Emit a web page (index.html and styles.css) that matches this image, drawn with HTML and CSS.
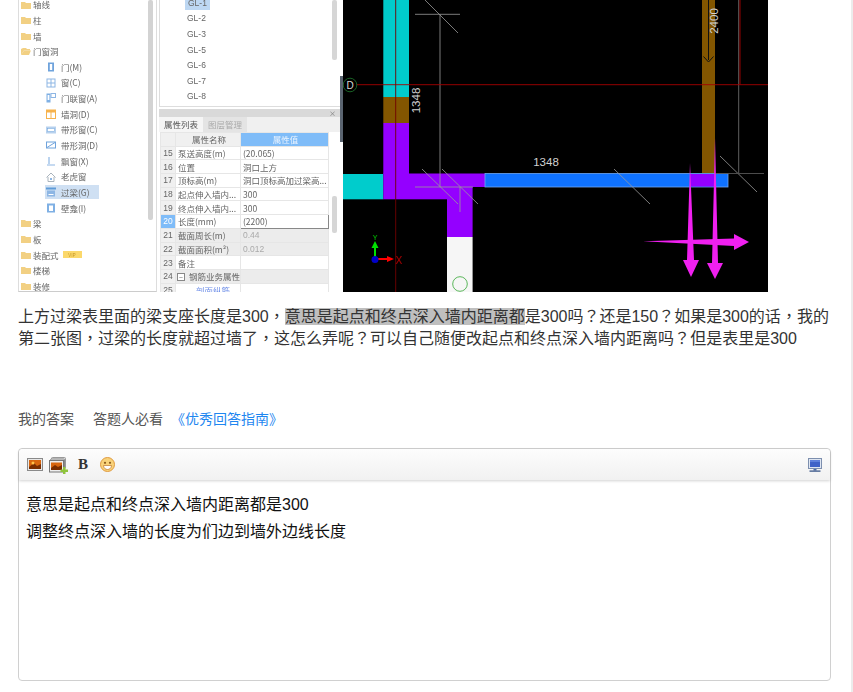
FILE: index.html
```html
<!DOCTYPE html>
<html lang="zh-CN">
<head>
<meta charset="utf-8">
<title>问题回答</title>
<link rel="stylesheet" href="styles.css">
</head>
<body>
<main class="page">
  <div class="shot">
    <div class="tree">
      <ul class="tree-list">
        <li class="node"><svg class="folder" viewBox="0 0 10 8"><path d="M0 1h4l1 1h5v6H0z"/></svg>轴线</li>
        <li class="node"><svg class="folder" viewBox="0 0 10 8"><path d="M0 1h4l1 1h5v6H0z"/></svg>柱</li>
        <li class="node"><svg class="folder" viewBox="0 0 10 8"><path d="M0 1h4l1 1h5v6H0z"/></svg>墙</li>
        <li class="node"><svg class="folder" viewBox="0 0 10 8"><path d="M2 1h3l1 1h3v1.500H3L0 8V2z"/><path d="M3 3.500h7L8 8H0z"/></svg>门窗洞</li>
        <li class="leaf"><svg class="ico" viewBox="0 0 10 10"><rect x="2" y="0.5" width="6" height="9" fill="#6fa3dc"/><rect x="3.800" y="2" width="2.400" height="6" fill="#fff"/></svg>门(M)</li>
        <li class="leaf"><svg class="ico" viewBox="0 0 10 10"><rect x="1" y="1" width="8" height="8" fill="#fff" stroke="#8db6e4"/><path d="M5 1v8M1 5h8" stroke="#8db6e4"/></svg>窗(C)</li>
        <li class="leaf"><svg class="ico" viewBox="0 0 10 10"><rect x="0.5" y="0.5" width="4" height="9" fill="#7fb0e4"/><rect x="1.600" y="2" width="1.800" height="5" fill="#fff"/><rect x="5" y="0.5" width="4.500" height="4" fill="#fff" stroke="#8db6e4"/></svg>门联窗(A)</li>
        <li class="leaf"><svg class="ico" viewBox="0 0 10 10"><rect x="0.5" y="1" width="9" height="8.500" fill="#fff" stroke="#f6b24c"/><rect x="0" y="1" width="10" height="2.500" fill="#f6b24c"/><path d="M5 3v6" stroke="#f6b24c"/></svg>墙洞(D)</li>
        <li class="leaf"><svg class="ico" viewBox="0 0 10 10"><rect x="0" y="1.500" width="10" height="7" fill="#b7d1ee"/><rect x="1.500" y="3.500" width="7" height="3" fill="#fff" stroke="#6fa3dc" stroke-width=".5"/></svg>带形窗(C)</li>
        <li class="leaf"><svg class="ico" viewBox="0 0 10 10"><rect x="0.5" y="2" width="9" height="6" fill="#fff" stroke="#6fa3dc"/><path d="M1 7.500 9 2.500" stroke="#6fa3dc"/></svg>带形洞(D)</li>
        <li class="leaf"><svg class="ico" viewBox="0 0 10 10"><path d="M3 1v7M1 9h8" stroke="#8db6e4" fill="none" stroke-width="1.200"/></svg>飘窗(X)</li>
        <li class="leaf"><svg class="ico" viewBox="0 0 10 10"><path d="M5 1 .5 5.500M5 1l4.500 4.500M2 5v4.500h6V5" stroke="#a9b3bc" fill="none"/><rect x="4" y="6" width="2" height="2" fill="#8db6e4"/></svg>老虎窗</li>
        <li class="leaf leaf-on"><svg class="ico" viewBox="0 0 10 10"><rect x="0" y="0.5" width="10" height="2" fill="#5f9bd8"/><rect x="1" y="3.500" width="8" height="6" fill="#8db6e4"/><path d="M2.500 7.500h5" stroke="#fff"/></svg>过梁(G)</li>
        <li class="leaf"><svg class="ico" viewBox="0 0 10 10"><rect x="1" y="0.500" width="8" height="9" fill="#7fb0e4"/><rect x="3" y="2.500" width="4" height="5.500" fill="#fff"/></svg>壁龛(I)</li>
        <li class="node"><svg class="folder" viewBox="0 0 10 8"><path d="M0 1h4l1 1h5v6H0z"/></svg>梁</li>
        <li class="node"><svg class="folder" viewBox="0 0 10 8"><path d="M0 1h4l1 1h5v6H0z"/></svg>板</li>
        <li class="node"><svg class="folder" viewBox="0 0 10 8"><path d="M0 1h4l1 1h5v6H0z"/></svg>装配式<span class="vip">VIP</span></li>
        <li class="node"><svg class="folder" viewBox="0 0 10 8"><path d="M0 1h4l1 1h5v6H0z"/></svg>楼梯</li>
        <li class="node"><svg class="folder" viewBox="0 0 10 8"><path d="M0 1h4l1 1h5v6H0z"/></svg>装修</li>
      </ul>
      <div class="tree-bar"></div>
    </div>

    <div class="side">
      <div class="gl">
        <ul class="gl-list">
          <li><span class="gl-on">GL-1</span></li>
          <li>GL-2</li>
          <li>GL-3</li>
          <li>GL-5</li>
          <li>GL-6</li>
          <li>GL-7</li>
          <li>GL-8</li>
        </ul>
        <div class="gl-bar"></div>
      </div>
      <div class="props-head">×</div>
      <div class="tabs"><span class="tab tab-on">属性列表</span><span class="tab">图层管理</span></div>
      <div class="props">
        <table class="grid">
          <thead><tr><th class="c-n"></th><th class="c-k">属性名称</th><th class="c-v th-on">属性值</th></tr></thead>
          <tbody>
            <tr><td class="c-n">15</td><td>泵送高度(m)</td><td>(20.065)</td></tr>
            <tr><td class="c-n">16</td><td>位置</td><td>洞口上方</td></tr>
            <tr><td class="c-n">17</td><td>顶标高(m)</td><td>洞口顶标高加过梁高...</td></tr>
            <tr><td class="c-n">18</td><td>起点伸入墙内...</td><td>300</td></tr>
            <tr><td class="c-n">19</td><td>终点伸入墙内...</td><td>300</td></tr>
            <tr><td class="c-n n-on">20</td><td>长度(mm)</td><td class="edit">(2200)</td></tr>
            <tr class="off"><td class="c-n">21</td><td>截面周长(m)</td><td class="dim">0.44</td></tr>
            <tr class="off"><td class="c-n">22</td><td>截面面积(m²)</td><td class="dim">0.012</td></tr>
            <tr><td class="c-n">23</td><td>备注</td><td></td></tr>
            <tr class="off"><td class="c-n">24</td><td class="group"><span class="minus">−</span>钢筋业务属性</td><td></td></tr>
            <tr><td class="c-n">25</td><td class="lnk">剖面纵筋</td><td></td></tr>
          </tbody>
        </table>
        <div class="props-bar"></div>
      </div>
    </div>

    <div class="rail"><div class="rail-thumb"></div></div>

    <svg class="cad" viewBox="343 0 425 292">
      <rect x="343" y="0" width="425" height="292" fill="#000"/>
      <rect x="383.300" y="0" width="25.700" height="97" fill="#00cccc"/>
      <rect x="383.300" y="97" width="25.700" height="26" fill="#835600"/>
      <rect x="383.300" y="123" width="25.700" height="51" fill="#9400ff"/>
      <rect x="343" y="174" width="40.300" height="25.300" fill="#00cccc"/>
      <rect x="383.300" y="173.500" width="102" height="13.500" fill="#9400ff"/>
      <rect x="383.300" y="187" width="89.300" height="12.300" fill="#9400ff"/>
      <rect x="447" y="199" width="25.600" height="38" fill="#9400ff"/>
      <rect x="447" y="237" width="25.600" height="55" fill="#f6f6f6"/>
      <circle cx="460" cy="284" r="7.300" fill="none" stroke="#5cb85c" stroke-width="1"/>
      <rect x="702" y="0" width="13" height="173.500" fill="#835600"/>
      <rect x="485" y="173.500" width="243" height="13.500" fill="#0f72ff" stroke="#6ea6f0" stroke-width=".8"/>
      <rect x="690" y="174" width="24" height="12.600" fill="#9400ff"/>
      <g fill="none" stroke="#9b9b9b" stroke-width=".8">
        <path d="M440 14.300V187M415 14.300h45M425 0l33 33"/>
        <path d="M415 187h58M422 169l36 35M442 169l36 35M460 187v25"/>
        <path d="M614 169l36 35M720 156l37 36"/>
      </g>
      <path d="M738.700 0v173.500" stroke="#777" stroke-width=".8"/>
      <path d="M715 173.500h49" stroke="#555" stroke-width=".9"/>
      <path d="M708.500 0v60M703.500 56.500l5 5.500 5-5.500" fill="none" stroke="#111" stroke-width="1"/>
      <path d="M343 84.700h425M740 0v84.700" stroke="#a50000" stroke-width=".9" fill="none"/>
      <path d="M395.700 0v292" stroke="#700000" stroke-width=".9"/>
      <circle cx="350" cy="85" r="6.800" fill="#000" stroke="#1f7a2e" stroke-width=".8"/>
      <text class="cad-d" x="350" y="89">D</text>
      <text class="cad-t" x="546" y="165.500">1348</text>
      <text class="cad-t" transform="translate(419.500 100.500) rotate(-90)">1348</text>
      <text class="cad-t" transform="translate(717.500 21) rotate(-90)">2400</text>
      <path d="M375 257v-11" stroke="#00e000" stroke-width="2"/>
      <path d="M375 241l-3.500 7h7z" fill="#00e000"/>
      <path d="M378 259h11" stroke="#ff0000" stroke-width="2"/>
      <path d="M394 259l-7-3v6z" fill="#ff0000"/>
      <circle cx="375" cy="259.500" r="3.500" fill="#0000c8"/>
      <text class="cad-y" x="375" y="240">Y</text>
      <text class="cad-x" x="398.500" y="263.500">X</text>
      <g fill="#f020f0">
        <path d="M690 163 687 260H683L691 277 699 260H694Z"/>
        <path d="M715 138 712 263H707L715 279 723 263H718Z"/>
        <path d="M643 241.300 734 238.500V234L749 242 734 250V246Z"/>
      </g>
    </svg>
  </div>

  <p class="question">上方过梁表里面的梁支座长度是300<span class="punct" lang="zh-TW">，</span><span class="mark">意思是起点和终点深入墙内距离都</span>是300吗<span class="punct" lang="zh-TW">？</span>还是150<span class="punct" lang="zh-TW">？</span>如果是300的话<span class="punct" lang="zh-TW">，</span>我的第二张图<span class="punct" lang="zh-TW">，</span>过梁的长度就超过墙了<span class="punct" lang="zh-TW">，</span>这怎么弄呢<span class="punct" lang="zh-TW">？</span>可以自己随便改起点和终点深入墙内距离吗<span class="punct" lang="zh-TW">？</span>但是表里是300</p>

  <div class="answer-head">
    <span class="my">我的答案</span>
    <span class="must">答题人必看</span>
    <a class="guide" href="#">《优秀回答指南》</a>
  </div>

  <section class="editor">
    <div class="toolbar">
      <button class="tool" type="button" aria-label="图片">
        <svg width="16" height="13" viewBox="0 0 16 13"><rect x=".5" y=".5" width="15" height="12" fill="#e8e8e8" stroke="#8a8a8a"/><rect x="2" y="2" width="12" height="9" fill="#d8660f"/><path d="M2 9 7 5l3 3 4-2v5H2z" fill="#7a2d00"/><circle cx="6" cy="5" r="1.500" fill="#ffc24a"/></svg>
      </button>
      <button class="tool tool-gallery" type="button" aria-label="图库">
        <svg width="19" height="17" viewBox="0 0 19 17"><rect x="2.500" y=".5" width="14" height="11" rx="1" fill="#ddd" stroke="#999"/><rect x="1.500" y="2" width="14" height="11" rx="1" fill="#e8e8e8" stroke="#888"/><rect x=".5" y="3.500" width="14" height="11.500" fill="#eee" stroke="#777"/><rect x="2" y="5.500" width="11" height="7.500" fill="#d8660f"/><path d="M2 11l4-3 3 2 4-2v5H2z" fill="#7a2d00"/><path d="M14 10h2.500v2.500H19V15h-2.500v2H14v-2h-2.500v-2.500H14z" fill="#8fc43c"/></svg>
      </button>
      <button class="tool tool-b" type="button">B</button>
      <button class="tool tool-smile" type="button" aria-label="表情">
        <svg width="15" height="15" viewBox="0 0 15 15"><circle cx="7.500" cy="7.500" r="7" fill="#f8d27a" stroke="#e09a3e"/><circle cx="5" cy="5.800" r="1.100" fill="#8a5a1c"/><circle cx="10" cy="5.800" r="1.100" fill="#8a5a1c"/><path d="M3.500 8.500h8c0 2.500-2 4-4 4s-4-1.500-4-4z" fill="#fff" stroke="#c2772a" stroke-width=".7"/></svg>
      </button>
      <button class="tool tool-screen" type="button" aria-label="全屏">
        <svg width="14" height="14" viewBox="0 0 14 14"><rect x=".5" y=".5" width="13" height="10" fill="#dfe6f2" stroke="#7d8fae"/><rect x="2" y="2" width="10" height="7" fill="#3f62c8"/><rect x="2" y="2" width="10" height="2" fill="#5e80dc"/><rect x="5.500" y="11" width="3" height="1.500" fill="#4a6aa8"/><rect x="1.500" y="12.500" width="11" height="1.200" fill="#2c4a80"/></svg>
      </button>
    </div>
    <div class="body">
      <p class="line">意思是起点和终点深入墙内距离都是300</p>
      <p class="line">调整终点深入墙的长度为们边到墙外边线长度</p>
    </div>
  </section>
</main>
</body>
</html>
```

FILE: styles.css
```css
* { box-sizing: border-box; }
html, body { margin: 0; padding: 0; }
body {
  background: #fff;
  height: 692px;
  overflow: hidden;
  font-family: "Liberation Sans", "Noto Sans CJK SC", sans-serif;
  color: #333;
}
.page {
  width: 853px;
  height: 692px;
  padding-left: 18px;
  border-right: 2px solid #ececec;
  overflow: hidden;
}
ul { list-style: none; margin: 0; padding: 0; }

/* screenshot embedded in the question */
.shot {
  display: flex;
  width: 750px;
  height: 292px;
  overflow: hidden;
  filter: blur(.45px);
  font-family: "Noto Sans CJK SC", sans-serif;
  font-size: 8.5px;
  color: #666;
}

.tree {
  display: flex;
  width: 139px;
  height: 292px;
  flex: none;
  border-left: 1px solid #ddd;
  border-right: 1px solid #ddd;
  border-bottom: 1px solid #ccc;
  overflow: hidden;
}
.tree-list {
  flex: 1;
  margin-top: -3.300px;
  display: grid;
  grid-auto-rows: 15.650px;
  align-content: start;
  min-width: 0;
}
.node, .leaf { display: flex; align-items: center; white-space: nowrap; line-height: 1; }
.node { padding-left: 2px; }
.folder { width: 10px; height: 8px; margin-right: 2px; fill: #f2d083; flex: none; }
.leaf { padding-left: 27px; height: 15.650px; }
.ico { width: 10px; height: 10px; margin-right: 5px; flex: none; }
.leaf-on { background: #cfe0f3; margin-left: 26px; padding-left: 1px; width: 54px; height: 14px; align-self: center; }
.vip {
  margin-left: 4px;
  width: 19px;
  height: 7px;
  background: #fbd86b;
  color: #c79a2a;
  font-size: 5px;
  line-height: 7px;
  text-align: center;
}
.tree-bar {
  width: 5px;
  height: 220px;
  margin-right: 3px;
  background: #d3d3d3;
  border-radius: 2px;
  flex: none;
}

.side {
  display: flex;
  flex-direction: column;
  width: 181px;
  height: 292px;
  flex: none;
  margin-left: 2px;
  overflow: hidden;
}
.gl {
  display: flex;
  height: 107px;
  flex: none;
  border: 1px solid #ddd;
  border-top: 0;
  border-right: 0;
  background: #fff;
  padding-right: 3px;
}
.gl-list {
  flex: 1;
  margin-top: -5px;
  padding-left: 27px;
  display: grid;
  grid-auto-rows: 15.600px;
  align-items: center;
  font-family: "Liberation Sans", sans-serif;
  font-size: 8.500px;
}
.gl-on { background: #bdd7f2; padding: 2px 3px; margin-left: -2px; }
.gl-bar { width: 5px; height: 60px; background: #d6d6d6; border-radius: 2px; }

.props-head {
  height: 8px;
  margin-top: 2px;
  flex: none;
  background: #d9d9d9;
  color: #777;
  font-size: 7px;
  line-height: 8px;
  text-align: right;
  padding-right: 4px;
}
.tabs { display: flex; height: 15px; flex: none; background: #f0f0f0; }
.tab { padding: 0 5px; line-height: 15px; background: #e4e4e4; color: #aaa; white-space: nowrap; }
.tab-on { background: #f5f5f5; color: #555; }

.props { display: flex; flex: 1; min-height: 0; background: #fff; overflow: hidden; }
.grid {
  width: 169px;
  flex: none;
  margin-left: 1px;
  border-collapse: collapse;
  table-layout: fixed;
  align-self: flex-start;
}
.grid th, .grid td {
  height: 13.700px;
  padding: 0 0 0 2px;
  font-weight: 400;
  line-height: 10px;
  border: 1px solid #e6e6e6;
  text-align: left;
  white-space: nowrap;
  overflow: hidden;
}
.grid th { text-align: center; background: #f0f0f0; }
.grid th.th-on { background: #7fbcf8; color: #e8f3ff; }
.grid .c-n { width: 15px; text-align: center; background: #f0f0f0; padding: 0; font-family: "Liberation Sans", sans-serif; }
.grid .c-k { width: 65px; }
.grid .n-on { background: #7fbcf8; color: #fff; }
.grid .edit { border: 1px solid #888; }
.grid .dim { color: #aaa; font-family: "Liberation Sans", sans-serif; }
.grid .off td { background: #ececec; }
.grid .off .c-n { background: #f0f0f0; }
.grid .lnk { color: #6f8fe8; padding-left: 20px; }
.grid .group { padding-left: 1px; }
.minus {
  display: inline-block;
  width: 8px;
  height: 8px;
  border: 1px solid #888;
  background: #fff;
  line-height: 6px;
  text-align: center;
  font-size: 7px;
  margin-right: 4px;
}
.props-bar { width: 5px; height: 37px; margin: 64px 0 0 3px; background: #d6d6d6; border-radius: 2px; flex: none; }

.rail { width: 3px; height: 292px; flex: none; }
.rail-thumb { width: 100%; height: 66px; margin-top: 76px; background: #5a6470; }

.cad { width: 425px; height: 292px; flex: none; display: block; }
.cad-t, .cad-d, .cad-x, .cad-y { font-family: "Liberation Sans", sans-serif; text-anchor: middle; }
.cad-t { font-size: 11.500px; fill: #d2d2d2; }
.cad-d { font-size: 10px; fill: #d8d8d8; }
.cad-y { font-size: 7px; fill: #00d000; }
.cad-x { font-size: 10px; fill: #b00000; }

/* question */
.question {
  width: 815px;
  margin: 14px 0 0;
  font-size: 16px;
  line-height: 22px;
  color: #333;
}
.punct { font-family: "Noto Sans CJK TC", sans-serif; line-height: 0; }
.mark { background: #bfbfbf; }

.answer-head {
  display: flex;
  margin-top: 59px;
  height: 20px;
  font-size: 14px;
  line-height: 20px;
  color: #555;
}
.my { margin-right: 19px; }
.must { margin-right: 8px; }
.guide { color: #1e86f0; text-decoration: none; }

/* editor */
.editor {
  width: 813px;
  height: 233px;
  margin-top: 19px;
  border: 1px solid #d0d0d0;
  border-radius: 4px;
  background: #fff;
}
.toolbar {
  display: flex;
  align-items: center;
  height: 31px;
  padding: 0 8px;
  gap: 6px;
  border-radius: 4px 4px 0 0;
  background: linear-gradient(#fdfdfd, #f1f1f1);
  box-shadow: 0 1px 3px rgba(0, 0, 0, .18);
}
.tool {
  display: flex;
  align-items: center;
  justify-content: center;
  padding: 0;
  border: 0;
  background: none;
}
.tool-gallery { margin-top: 2px; }
.tool-b {
  width: 12px;
  margin: 0 3px;
  font: 700 15px "Liberation Serif", serif;
  color: #333;
}
.tool-smile { margin-left: 2px; }
.tool-screen { margin-left: auto; }
.body { padding: 11px 7px 0; }
.line {
  margin: 0;
  font-size: 16px;
  line-height: 27px;
  color: #111;
}
```
